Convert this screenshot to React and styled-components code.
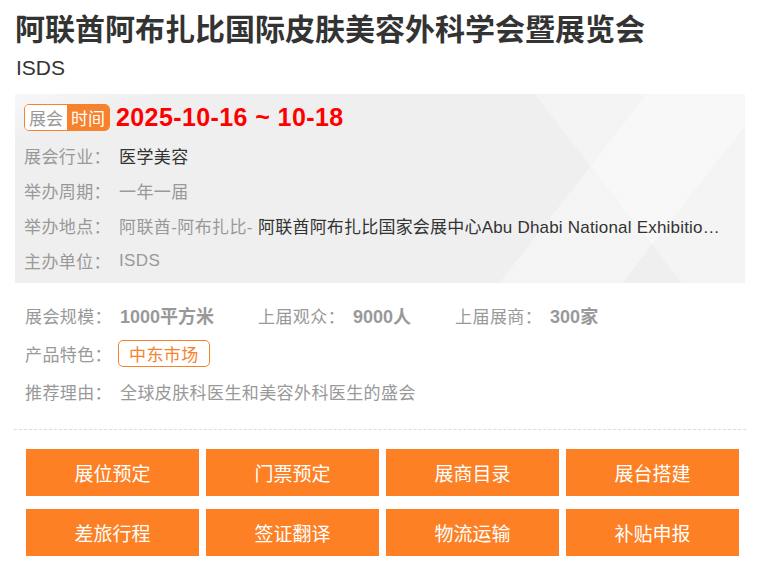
import React from 'react';
import styled, { createGlobalStyle } from 'styled-components';

const GlobalStyle = createGlobalStyle`
  html, body {
    margin: 0;
    padding: 0;
    background: #fff;
  }
  body {
    font-family: "Liberation Sans", "Noto Sans CJK SC", sans-serif;
    color: #333;
  }
`;

const Page = styled.div`
  width: 761px;
  padding: 10px 15px 0 15px;
  box-sizing: border-box;
`;

const Title = styled.h1`
  margin: 0;
  font-size: 30px;
  line-height: 40px;
  font-weight: 700;
  color: #333;
  white-space: nowrap;
`;

const SubTitle = styled.div`
  margin: 2px 0 10px 1px;
  font-size: 21px;
  line-height: 32px;
  color: #333;
`;

const InfoBox = styled.div`
  width: 730px;
  box-sizing: border-box;
  padding: 10px 8px 5px 9px;
  background-color: #efefef;
  background-image:
    linear-gradient(128deg, rgba(255, 255, 255, 0) 72%, rgba(255, 255, 255, 0.35) 72%, rgba(255, 255, 255, 0.35) 86%, rgba(255, 255, 255, 0) 86%),
    linear-gradient(52deg, rgba(255, 255, 255, 0) 76%, rgba(255, 255, 255, 0.3) 76%),
    linear-gradient(160deg, rgba(255, 255, 255, 0.5) 0%, rgba(255, 255, 255, 0) 12%);
`;

const DateLine = styled.div`
  display: flex;
  align-items: center;
  gap: 6px;
  height: 27px;
  margin-bottom: 7px;
`;

const Badge = styled.span`
  display: inline-flex;
  height: 27px;
  box-sizing: border-box;
  border: 1px solid #f7822e;
  border-radius: 5px;
  overflow: hidden;
  font-size: 17px;
`;

const BadgePart = styled.span`
  display: flex;
  align-items: center;
  justify-content: center;
  width: 42px;
  background: ${({ filled }) => (filled ? '#f7822e' : '#fff')};
  color: ${({ filled }) => (filled ? '#fff' : '#999')};
`;

const DateText = styled.span`
  font-size: 25px;
  font-weight: 700;
  color: #f00;
  line-height: 27px;
  letter-spacing: 0.4px;
`;

const Row = styled.div`
  display: flex;
  align-items: center;
  height: ${({ h }) => h || 35}px;
  font-size: 17px;
  letter-spacing: 0.4px;
  white-space: nowrap;
  min-width: 0;
`;

const Label = styled.span`
  flex: none;
  width: 95px;
  color: #999;
`;

const Value = styled.span`
  color: ${({ dark }) => (dark ? '#333' : '#999')};
`;

const Venue = styled.span`
  flex: 1;
  min-width: 0;
  overflow: hidden;
  color: #999;
`;

const Dark = styled.span`
  color: #333;
  letter-spacing: 0.2px;
`;

const Details = styled.div`
  display: flex;
  flex-direction: column;
  gap: 2px;
  padding: 14px 0 0 10px;
`;

const StatLabel = styled.span`
  color: #999;
  margin-right: 8px;
`;

const StatValue = styled.span`
  color: #999;
  font-weight: 700;
  font-size: 18px;
  letter-spacing: 0;
  margin-right: 44px;
`;

const Tag = styled.span`
  display: inline-flex;
  align-items: center;
  height: 27px;
  box-sizing: border-box;
  margin-left: -2px;
  padding: 0 10px;
  border: 1px solid #f7822e;
  border-radius: 5px;
  color: #f7822e;
  font-size: 17px;
`;

const Divider = styled.hr`
  width: 732px;
  margin: 20px 0 0 -1px;
  border: none;
  border-top: 1px dashed #dcdcdc;
`;

const ButtonGrid = styled.div`
  display: grid;
  grid-template-columns: repeat(4, 173px);
  column-gap: 7px;
  row-gap: 13px;
  padding: 19px 0 0 11px;
`;

const ActionButton = styled.button`
  height: 47px;
  border: none;
  border-radius: 0;
  background: #fd8025;
  color: #fff;
  font-family: "Liberation Sans", "Noto Sans CJK SC", sans-serif;
  font-size: 19px;
  cursor: pointer;
`;

const actions = ['展位预定', '门票预定', '展商目录', '展台搭建', '差旅行程', '签证翻译', '物流运输', '补贴申报'];

export default function App() {
  return (
    <Page>
      <GlobalStyle />
      <Title>阿联酋阿布扎比国际皮肤美容外科学会暨展览会</Title>
      <SubTitle>ISDS</SubTitle>
      <InfoBox>
        <DateLine>
          <Badge>
            <BadgePart>展会</BadgePart>
            <BadgePart filled>时间</BadgePart>
          </Badge>
          <DateText>2025-10-16 ~ 10-18</DateText>
        </DateLine>
        <Row>
          <Label>展会行业：</Label>
          <Value dark>医学美容</Value>
        </Row>
        <Row>
          <Label>举办周期：</Label>
          <Value>一年一届</Value>
        </Row>
        <Row>
          <Label>举办地点：</Label>
          <Venue>
            阿联酋-阿布扎比- <Dark>阿联酋阿布扎比国家会展中心Abu Dhabi National Exhibitio…</Dark>
          </Venue>
        </Row>
        <Row>
          <Label>主办单位：</Label>
          <Value>ISDS</Value>
        </Row>
      </InfoBox>
      <Details>
        <Row h={36}>
          <StatLabel>展会规模：</StatLabel>
          <StatValue>1000平方米</StatValue>
          <StatLabel>上届观众：</StatLabel>
          <StatValue>9000人</StatValue>
          <StatLabel>上届展商：</StatLabel>
          <StatValue>300家</StatValue>
        </Row>
        <Row h={36}>
          <Label>产品特色：</Label>
          <Tag>中东市场</Tag>
        </Row>
        <Row h={36}>
          <Label>推荐理由：</Label>
          <Value>全球皮肤科医生和美容外科医生的盛会</Value>
        </Row>
      </Details>
      <Divider />
      <ButtonGrid>
        {actions.map((a) => (
          <ActionButton key={a}>{a}</ActionButton>
        ))}
      </ButtonGrid>
    </Page>
  );
}
